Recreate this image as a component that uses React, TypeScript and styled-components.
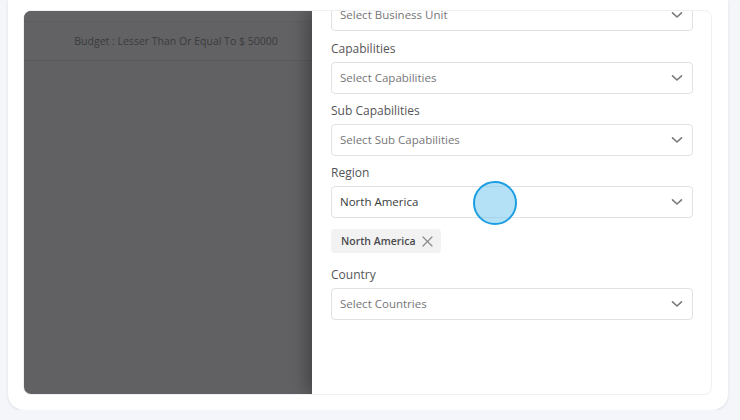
import styled, { createGlobalStyle } from "styled-components";

const GlobalStyle = createGlobalStyle`
  html, body {
    margin: 0;
    padding: 0;
    background: #f4f6f9;
    font-family: "Open Sans", "Liberation Sans", sans-serif;
    overflow: hidden;
  }
`;

interface Field {
  label: string;
  value: string;
  selected?: boolean;
  chips?: string[];
}

const fields: Field[] = [
  { label: "Capabilities", value: "Select Capabilities" },
  { label: "Sub Capabilities", value: "Select Sub Capabilities" },
  { label: "Region", value: "North America", selected: true, chips: ["North America"] },
  { label: "Country", value: "Select Countries" },
];

const Chevron = () => (
  <svg width="12" height="8" viewBox="0 0 12 8" fill="none">
    <path d="M1.5 1.8 6 6 10.5 1.8" stroke="#7a7a7a" strokeWidth="1.6" strokeLinecap="round" strokeLinejoin="round" />
  </svg>
);

const Cross = () => (
  <svg width="11" height="11" viewBox="0 0 11 11" fill="none">
    <path d="M1 1 10 10M10 1 1 10" stroke="#8a8a8a" strokeWidth="1.2" strokeLinecap="round" />
  </svg>
);

const SelectBox = ({ value, selected }: { value: string; selected?: boolean }) => (
  <Select>
    <SelectText $selected={selected}>{value}</SelectText>
    <Chevron />
  </Select>
);

export default function App() {
  return (
    <>
      <GlobalStyle />
      <Page>
        <Card>
          <Inner>
            <Backdrop>
              <TopRow />
              <BudgetRow>Budget : Lesser Than Or Equal To $ 50000</BudgetRow>
            </Backdrop>
            <Drawer>
              <Scroller>
                <Group $first>
                  <SelectBox value="Select Business Unit" />
                </Group>
                {fields.map((f) => (
                  <Group key={f.label}>
                    <Label>{f.label}</Label>
                    <SelectBox value={f.value} selected={f.selected} />
                    {f.chips && (
                      <Chips>
                        {f.chips.map((c) => (
                          <Chip key={c}>
                            {c}
                            <Cross />
                          </Chip>
                        ))}
                      </Chips>
                    )}
                  </Group>
                ))}
              </Scroller>
            </Drawer>
          </Inner>
        </Card>
      </Page>
      <TouchDot />
    </>
  );
}

const Page = styled.div`
  padding: 0 12px 0 8px;
`;

const Card = styled.div`
  width: 720px;
  box-sizing: border-box;
  background: #ffffff;
  padding: 11px 17px 16px 16px;
  border-radius: 0 0 16px 16px;
  box-shadow: 0 1px 3px rgba(20, 30, 50, 0.1);
`;

const Inner = styled.div`
  display: flex;
  height: 383px;
  border-radius: 7px;
  overflow: hidden;
  box-shadow: 0 0 0 1px #eef0f3;
`;

const Backdrop = styled.div`
  width: 288px;
  flex-shrink: 0;
  background: #616163;
`;

const TopRow = styled.div`
  height: 10px;
  background: #636365;
  border-bottom: 1px solid #5e5e60;
`;

const BudgetRow = styled.div`
  height: 38px;
  display: flex;
  align-items: center;
  justify-content: center;
  padding-left: 16px;
  background: #626264;
  border-bottom: 1px solid #5a5a5c;
  font-size: 10.5px;
  color: #3b3b3d;
`;

const Drawer = styled.div`
  flex: 1;
  background: #ffffff;
  box-shadow: -6px 0 14px rgba(0, 0, 0, 0.28);
  position: relative;
  z-index: 1;
  overflow: hidden;
`;

const Scroller = styled.div`
  margin-top: -12px;
  padding: 0 18px 0 19px;
`;

const Group = styled.div<{ $first?: boolean }>`
  display: flex;
  flex-direction: column;
  margin-bottom: ${(p) => (p.$first ? "8px" : "7px")};
`;

const Label = styled.div`
  font-size: 12px;
  line-height: 19px;
  color: #555557;
  margin-bottom: 4px;
`;

const Select = styled.div`
  height: 32px;
  box-sizing: border-box;
  border: 1px solid #e2e2e4;
  border-radius: 4px;
  display: flex;
  align-items: center;
  justify-content: space-between;
  padding: 0 9px 1px 8px;
`;

const SelectText = styled.span<{ $selected?: boolean }>`
  font-size: 11.5px;
  color: ${(p) => (p.$selected ? "#3a3a3c" : "#767678")};
`;

const Chips = styled.div`
  display: flex;
  gap: 6px;
  margin: 11px 0 5px;
`;

const Chip = styled.div`
  display: flex;
  align-items: center;
  gap: 6px;
  height: 24px;
  padding: 0 8px 0 10px;
  border-radius: 4px;
  background: #f2f2f3;
  font-size: 10.5px;
  font-weight: 600;
  color: #4a4a4c;
`;

const TouchDot = styled.div`
  position: absolute;
  z-index: 10;
  left: 473px;
  top: 181px;
  width: 44px;
  height: 44px;
  box-sizing: border-box;
  border-radius: 50%;
  border: 2px solid #1b9ee2;
  background: rgba(120, 200, 240, 0.55);
`;
